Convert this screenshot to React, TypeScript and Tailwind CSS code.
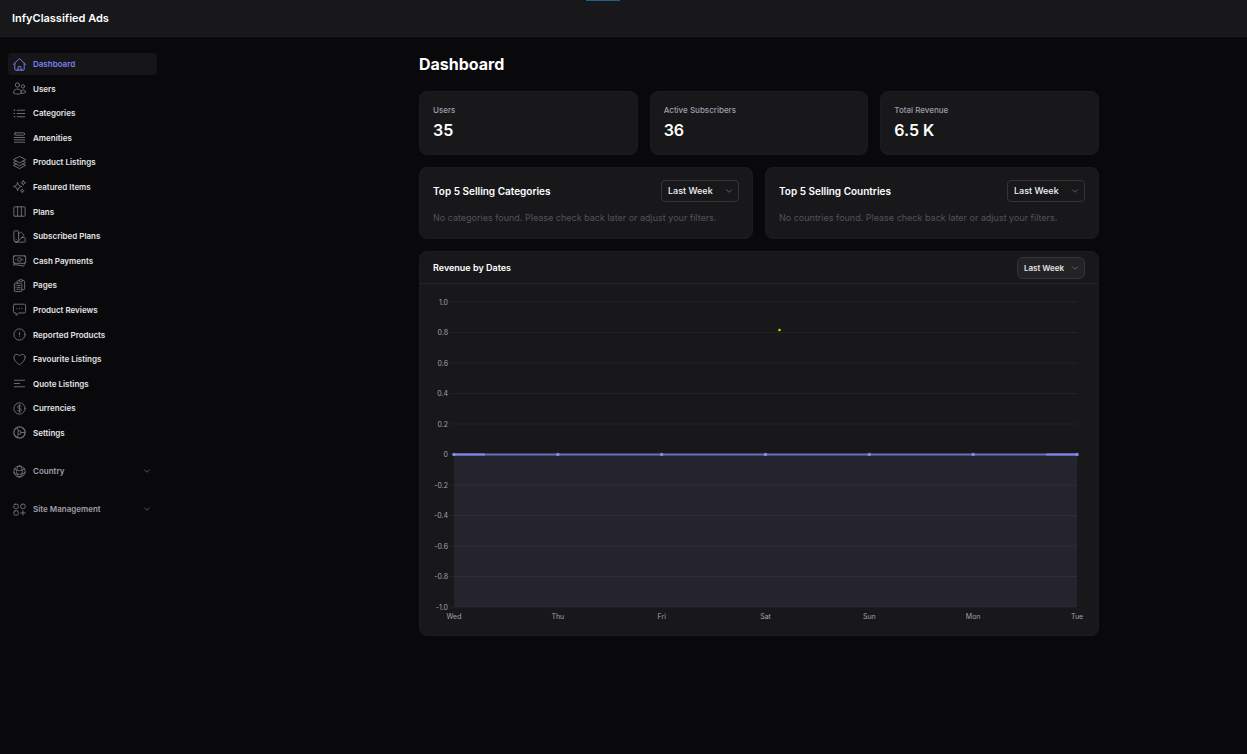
import { useState } from "react";
import type { ReactNode } from "react";
import type { IconType } from "react-icons";
import {
    HiOutlineBanknotes,
    HiOutlineBars3CenterLeft,
    HiOutlineChevronDown,
    HiOutlineClipboardDocumentList,
    HiOutlineCurrencyDollar,
    HiOutlineExclamationCircle,
    HiOutlineGlobeAlt,
    HiOutlineHeart,
    HiOutlineHome,
    HiOutlineListBullet,
    HiOutlineQueueList,
    HiOutlineSparkles,
    HiOutlineSquare3Stack3D,
    HiOutlineSwatch,
    HiOutlineUsers,
    HiOutlineViewColumns,
} from "react-icons/hi2";

type OutlineIconProps = { className?: string; children?: ReactNode };

const OutlineIcon = ({ className, children }: OutlineIconProps) => (
    <svg
        viewBox="0 0 24 24"
        fill="none"
        stroke="currentColor"
        strokeWidth="1.5"
        strokeLinecap="round"
        strokeLinejoin="round"
        className={className}
        aria-hidden="true"
    >
        {children}
    </svg>
);

const ReviewIcon = ({ className }: OutlineIconProps) => (
    <OutlineIcon className={className}>
        <path d="M4.5 3.5h15a2.25 2.25 0 0 1 2.25 2.25v9.5a2.25 2.25 0 0 1-2.25 2.25H11l-4.5 4v-4h-2a2.25 2.25 0 0 1-2.25-2.25v-9.5A2.25 2.25 0 0 1 4.5 3.5Z" />
        <path d="M8 10.5h.01M12 10.5h.01M16 10.5h.01" strokeWidth="2" />
    </OutlineIcon>
);

const SettingsIcon = ({ className }: OutlineIconProps) => (
    <OutlineIcon className={className}>
        <circle cx="12" cy="12" r="9" strokeWidth="2" />
        <circle cx="12" cy="12" r="2.75" />
        <path d="M14.75 12h5.75M10.6 9.6 7.75 4.65M10.6 14.4l-2.85 4.95" />
    </OutlineIcon>
);

const SiteIcon = ({ className }: OutlineIconProps) => (
    <OutlineIcon className={className}>
        <rect x="3" y="3.5" width="7" height="7" rx="2.25" />
        <rect x="14" y="3.5" width="7" height="7" rx="2.25" />
        <rect x="3" y="14" width="7" height="7" rx="2.25" />
        <path d="M17.5 14v7M14 17.5h7" />
    </OutlineIcon>
);

type NavItem = { label: string; icon: IconType | typeof ReviewIcon };

const navItems: NavItem[] = [
    { label: "Dashboard", icon: HiOutlineHome },
    { label: "Users", icon: HiOutlineUsers },
    { label: "Categories", icon: HiOutlineListBullet },
    { label: "Amenities", icon: HiOutlineQueueList },
    { label: "Product Listings", icon: HiOutlineSquare3Stack3D },
    { label: "Featured Items", icon: HiOutlineSparkles },
    { label: "Plans", icon: HiOutlineViewColumns },
    { label: "Subscribed Plans", icon: HiOutlineSwatch },
    { label: "Cash Payments", icon: HiOutlineBanknotes },
    { label: "Pages", icon: HiOutlineClipboardDocumentList },
    { label: "Product Reviews", icon: ReviewIcon },
    { label: "Reported Products", icon: HiOutlineExclamationCircle },
    { label: "Favourite Listings", icon: HiOutlineHeart },
    { label: "Quote Listings", icon: HiOutlineBars3CenterLeft },
    { label: "Currencies", icon: HiOutlineCurrencyDollar },
    { label: "Settings", icon: SettingsIcon },
];

const navGroups: NavItem[] = [
    { label: "Country", icon: HiOutlineGlobeAlt },
    { label: "Site Management", icon: SiteIcon },
];

const stats = [
    { label: "Users", value: "35" },
    { label: "Active Subscribers", value: "36" },
    { label: "Total Revenue", value: "6.5 K" },
];

const topLists = [
    {
        id: "categories",
        title: "Top 5 Selling Categories",
        empty: "No categories found. Please check back later or adjust your filters.",
    },
    {
        id: "countries",
        title: "Top 5 Selling Countries",
        empty: "No countries found. Please check back later or adjust your filters.",
    },
];

const yTicks = ["1.0", "0.8", "0.6", "0.4", "0.2", "0", "-0.2", "-0.4", "-0.6", "-0.8", "-1.0"];
const days = ["Wed", "Thu", "Fri", "Sat", "Sun", "Mon", "Tue"];

const plot = { left: 34, right: 657, top: 18, bottom: 323 };
const xAt = (index: number) => plot.left + ((plot.right - plot.left) * index) / (days.length - 1);
const yAt = (index: number) => plot.top + ((plot.bottom - plot.top) * index) / (yTicks.length - 1);

type PeriodSelectProps = { id: string; compact?: boolean };

const PeriodSelect = ({ id, compact = false }: PeriodSelectProps) => {
    const [period, setPeriod] = useState("week");

    return (
        <div className={compact ? "relative w-[68px]" : "relative w-[78px]"}>
            <select
                id={id}
                value={period}
                onChange={(event) => setPeriod(event.target.value)}
                className={
                    compact
                        ? "block h-[22px] w-full appearance-none rounded-md border border-[#353538] bg-[#232326] pl-1.5 text-[8px] font-semibold text-zinc-200 outline-none"
                        : "block h-[22px] w-full appearance-none rounded border border-[#353538] bg-[#18181b] pl-1.5 text-[9px] font-medium text-zinc-100 outline-none"
                }
            >
                <option value="week">Last Week</option>
                <option value="month">Last Month</option>
                <option value="year">Last Year</option>
            </select>
            <HiOutlineChevronDown className="pointer-events-none absolute top-[7px] right-1.5 size-2 text-zinc-400" />
        </div>
    );
};

const RevenueChart = () => (
    <svg viewBox="0 0 678 351" className="block w-full" role="img" aria-label="Revenue by Dates">
        <rect
            x={plot.left}
            y={yAt(5)}
            width={plot.right - plot.left}
            height={plot.bottom - yAt(5)}
            fill="#24232e"
        />
        {yTicks.map((tick, index) => (
            <g key={tick}>
                <line
                    x1="30"
                    x2={plot.right}
                    y1={yAt(index)}
                    y2={yAt(index)}
                    stroke="#ffffff"
                    strokeOpacity="0.05"
                />
                <text x="28" y={yAt(index) + 2.5} textAnchor="end" fontSize="7" fill="#a1a1aa">
                    {tick}
                </text>
            </g>
        ))}
        <line x1={plot.left} x2={plot.right} y1={yAt(5)} y2={yAt(5)} stroke="#6b6fc4" strokeWidth="2" />
        <path d={`M${plot.left} ${yAt(5)}h31M${plot.right - 31} ${yAt(5)}h31`} stroke="#8287ea" strokeWidth="2" />
        {days.map((day, index) => (
            <g key={day}>
                <circle cx={xAt(index)} cy={yAt(5)} r="1.8" fill="#8287ea" />
                <text x={xAt(index)} y="335" textAnchor="middle" fontSize="7" fill="#a1a1aa">
                    {day}
                </text>
            </g>
        ))}
        <circle cx="359.5" cy="46" r="1.3" fill="#d9c514" />
    </svg>
);

const Sidebar = () => {
    const [active, setActive] = useState("Dashboard");

    return (
        <aside className="w-[271px] shrink-0 pt-4 pl-2">
            <nav className="w-[149px] text-[8px] font-semibold">
                <ul className="flex h-[391px] flex-col justify-between">
                    {navItems.map(({ label, icon: Icon }) => {
                        const isActive = label === active;

                        return (
                            <li key={label}>
                                <a
                                    href="#"
                                    onClick={() => setActive(label)}
                                    className={
                                        isActive
                                            ? "flex h-[22px] items-center gap-1.5 rounded bg-[#161618] pl-1 text-[#7b7ff0]"
                                            : "flex h-[22px] items-center gap-1.5 rounded pl-1 text-zinc-200"
                                    }
                                >
                                    <Icon
                                        className={
                                            isActive
                                                ? "size-[15px] shrink-0 text-[#7b7ff0]"
                                                : "size-[15px] shrink-0 text-zinc-500"
                                        }
                                    />
                                    {label}
                                </a>
                            </li>
                        );
                    })}
                </ul>
                <div className="mt-4 flex flex-col gap-4">
                    {navGroups.map(({ label, icon: Icon }) => (
                        <button
                            key={label}
                            type="button"
                            className="flex h-[22px] w-full items-center gap-1.5 pr-1.5 pl-1 text-left text-zinc-400"
                        >
                            <Icon className="size-[15px] shrink-0 text-zinc-500" />
                            <span className="flex-1">{label}</span>
                            <HiOutlineChevronDown className="size-2 text-zinc-400" />
                        </button>
                    ))}
                </div>
            </nav>
        </aside>
    );
};

const App = () => {
    return (
        <div className="min-h-screen bg-[#09090b] font-['Inter',sans-serif] text-white">
            <header className="relative flex h-[37px] items-center border-b border-[#1c1c1f] bg-[#18181b] px-3">
                <span className="text-[11px] font-semibold">InfyClassified Ads</span>
                <div className="absolute top-0 left-[47%] h-px w-[34px] bg-[#1f5f86]"></div>
            </header>

            <div className="flex">
                <Sidebar />

                <main className="min-w-0 flex-1 pt-4 pb-8">
                    <div className="mx-auto flex max-w-[680px] flex-col gap-3">
                        <h1 className="mb-1 text-[16px] leading-[22px] font-bold">Dashboard</h1>

                        <div className="grid grid-cols-3 gap-3">
                            {stats.map((stat) => (
                                <section
                                    key={stat.label}
                                    className="h-16 rounded-lg border border-[#1c1c1f] bg-[#18181b] px-[13px] pt-3"
                                >
                                    <h2 className="text-[8px] leading-3 font-medium text-zinc-400">{stat.label}</h2>
                                    <p className="mt-1 text-[16px] leading-5 font-semibold">{stat.value}</p>
                                </section>
                            ))}
                        </div>

                        <div className="grid grid-cols-2 gap-3">
                            {topLists.map((list) => (
                                <section
                                    key={list.id}
                                    className="h-[72px] rounded-lg border border-[#1c1c1f] bg-[#18181b] px-[13px] pt-3"
                                >
                                    <div className="flex items-center justify-between">
                                        <h2 className="text-[10px] font-semibold">
                                            <label htmlFor={list.id}>{list.title}</label>
                                        </h2>
                                        <PeriodSelect id={list.id} />
                                    </div>
                                    <p className="mt-2 text-[9px] leading-4 text-zinc-600">{list.empty}</p>
                                </section>
                            ))}
                        </div>

                        <section className="rounded-lg border border-[#1c1c1f] bg-[#18181b]">
                            <div className="flex h-8 items-center justify-between border-b border-[#252528] px-[13px]">
                                <h2 className="text-[9px] font-semibold">
                                    <label htmlFor="revenue">Revenue by Dates</label>
                                </h2>
                                <PeriodSelect id="revenue" compact />
                            </div>
                            <RevenueChart />
                        </section>
                    </div>
                </main>
            </div>
        </div>
    );
};

export default App;
